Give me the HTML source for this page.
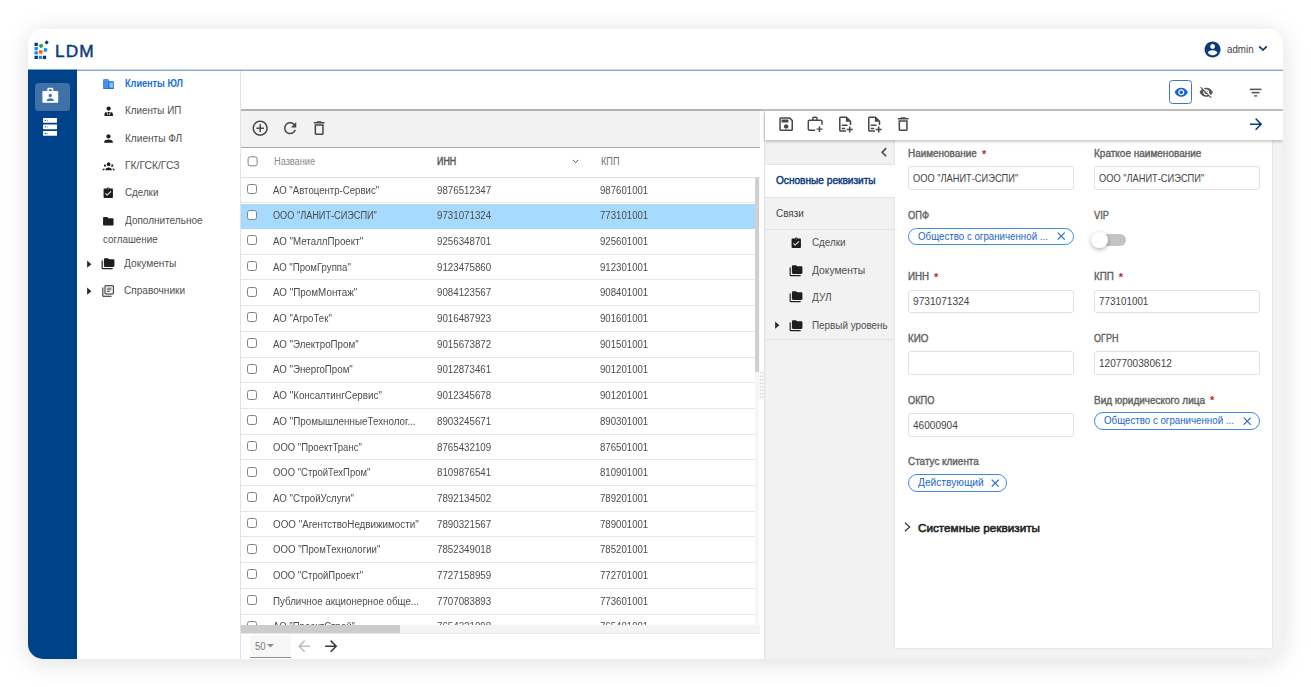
<!DOCTYPE html>
<html lang="ru">
<head>
<meta charset="utf-8">
<title>LDM</title>
<style>
*{box-sizing:border-box;margin:0;padding:0}
html,body{width:1311px;height:687px;overflow:hidden;background:#fff}
body{font-family:"Liberation Sans",sans-serif;font-size:10.4px;color:#333;position:relative}
.abs{position:absolute}
#shadow{position:absolute;left:28px;top:29px;width:1255px;height:630px;border-radius:15px;box-shadow:0 3px 26px rgba(0,0,0,.13)}
#card{position:absolute;left:28px;top:29px;width:1255px;height:630px;border-radius:15px;background:#fff;overflow:hidden}
#in{position:absolute;left:-28px;top:-29px;width:1311px;height:687px}
.t{position:absolute;white-space:nowrap;line-height:14px;height:14px;transform-origin:0 50%}
.cb{position:absolute;left:247px;width:10px;height:10px;border:1px solid #828282;border-radius:2.5px;background:#fff}
.row{position:absolute;left:0;width:514px;border-bottom:1px solid #e6e6e6}
.row.sel{background:#a6dbff;border-bottom-color:#a6dbff}
.inp{position:absolute;height:23.8px;width:166px;border:1px solid #e1e1e1;border-radius:3px;background:#fff}
.chip{position:absolute;height:17.6px;border:1.2px solid #4088e6;border-radius:9px;background:#fff}
.req{color:#c62828}
</style>
</head>
<body>
<div id="shadow"></div>
<div id="card"><div id="in">

<div class="abs" style="left:28px;top:28px;width:1255px;height:42px;background:#fff"></div>
<svg class="abs" style="left:33px;top:38px" width="18" height="23" viewBox="0 0 18 23"><rect x="1.55" y="4.65" width="3.3" height="3.3" rx="0.3" fill="#0a3478"/><rect x="1.55" y="8.9" width="3.3" height="3.3" rx="0.3" fill="#0a8cff"/><rect x="1.55" y="13.2" width="3.3" height="3.3" rx="0.3" fill="#0a8cff"/><rect x="1.55" y="17.7" width="3.3" height="3.3" rx="0.3" fill="#0a3478"/><rect x="6.35" y="6.05" width="3.5" height="3.5" rx="0.3" fill="#2ea043" transform="rotate(-20 8.1 7.8)"/><rect x="5.9" y="12.2" width="3.6" height="3.6" rx="0.3" fill="#ff5f0f" transform="rotate(12 7.7 14)"/><rect x="10.8" y="10.2" width="3.4" height="3.4" rx="0.3" fill="#0a8cff" transform="rotate(8 12.5 11.9)"/><rect x="12.15" y="2.85" width="3.1" height="3.1" rx="0.3" fill="#0a3478" transform="rotate(38 13.7 4.4)"/><rect x="5.9" y="17.75" width="3.2" height="3.2" rx="0.3" fill="#0a8cff"/><rect x="9.9" y="17.75" width="3.2" height="3.2" rx="0.3" fill="#0a3478"/></svg>
<div class="t" style="left:55px;top:41.25px;font-size:17.3px;line-height:20px;height:20px;color:#083a7c;letter-spacing:1.1px;-webkit-text-stroke:0.45px #083a7c">LDM</div>
<svg class="abs" style="left:1202.7px;top:39.7px" width="19.2" height="19.2" viewBox="0 0 24 24"><path fill="#083a7c" d="M12 2C6.48 2 2 6.48 2 12s4.48 10 10 10 10-4.48 10-10S17.52 2 12 2zm0 3c1.66 0 3 1.34 3 3s-1.34 3-3 3-3-1.34-3-3 1.34-3 3-3zm0 14.2c-2.5 0-4.71-1.28-6-3.22.03-1.99 4-3.08 6-3.08 1.99 0 5.97 1.09 6 3.08-1.29 1.94-3.5 3.22-6 3.22z"/></svg>
<div class="t" style="left:1226.7px;top:42.75px;font-size:10.4px;color:#444;transform:scaleX(0.939);">admin</div>
<svg class="abs" style="left:1258px;top:45.1px" width="10" height="7" viewBox="0 0 10 7"><path d="M1.2 1.3L5 5.1 8.8 1.3" fill="none" stroke="#083a7c" stroke-width="1.8"/></svg>
<div class="abs" style="left:28px;top:70px;width:49px;height:590px;background:#00428a"></div>
<div class="abs" style="left:34.5px;top:83px;width:35px;height:27.7px;border-radius:3.5px;background:#3f70a6"></div>
<svg class="abs" style="left:42px;top:87px" width="17" height="17" viewBox="0 0 17 17"><path fill="#fff" fill-rule="evenodd" d="M5.3 4V2.2c0-.8.6-1.4 1.4-1.4h3.2c.8 0 1.400.6 1.4 1.4V4h4c.5 0 .9.400.9.9v10c0 .5-.4.9-.9.9H1.3c-.5 0-.9-.4-.9-.9v-10c0-.5.4-.9.9-.9h4zM6.8 4h3V2.3h-3V4zM8.3 6.8a1.7 1.7 0 1 0 0 3.4 1.7 1.7 0 0 0 0-3.4zM4.8 13.9h7v-.6c0-1.3-2.3-2-3.5-2s-3.500.7-3.5 2v.6z"/></svg>
<svg class="abs" style="left:42.9px;top:118.1px" width="14.3" height="17.8" viewBox="0 0 14.3 17.8"><rect x="0" y="0" width="14.3" height="4.7" rx="0.6" fill="#fff"/><rect x="1.8" y="1.85" width="1.1" height="1.1" fill="#00428a"/><rect x="4" y="1.85" width="0.9" height="1.1" fill="#7f9fc4"/><rect x="0" y="6.45" width="14.3" height="4.7" rx="0.6" fill="#fff"/><rect x="1.8" y="8.3" width="1.1" height="1.1" fill="#00428a"/><rect x="4" y="8.3" width="0.9" height="1.1" fill="#7f9fc4"/><rect x="0" y="13" width="14.3" height="4.7" rx="0.6" fill="#fff"/><rect x="1.8" y="14.85" width="1.1" height="1.1" fill="#00428a"/><rect x="4" y="14.85" width="0.9" height="1.1" fill="#7f9fc4"/></svg>
<div class="abs" style="left:77px;top:70px;width:164px;height:590px;background:#fff;border-right:1px solid #e2e2e2"></div>
<svg class="abs" style="left:103px;top:78.8px" width="11" height="10.4" viewBox="0 0 11 10.4"><path fill="#1a6fe0" d="M0.2 0.9Q0.2 0.2 0.9 0.2H5.1Q5.8 0.2 5.8 0.9V2.2H10.1Q10.8 2.2 10.8 2.9V9.4Q10.8 10.1 10.1 10.1H0.9Q0.2 10.1 0.2 9.4z"/><path stroke="#7fb2f3" stroke-width="0.45" fill="none" d="M1.7 0.8v8.4M3.1 0.8v8.4M4.5 0.8v8.4M0.7 1.5h4.6M0.7 3.3h4.6M0.7 5.1h4.6M0.7 6.9h4.6M0.7 8.7h4.6"/><path fill="#c4dcfa" d="M6.6 3.7h3.2v4.9H6.6z"/><path stroke="#4a8fe8" stroke-width="0.4" d="M8.2 3.7v4.9M6.6 5.3h3.2M6.6 6.9h3.2"/></svg>
<div class="t" style="left:124.7px;top:76.75px;font-size:10.4px;color:#1a6fe0;font-weight:bold;transform:scaleX(0.8801);">Клиенты ЮЛ</div>
<svg class="abs" style="left:103px;top:105px" width="12" height="12" viewBox="0 0 12 12"><circle cx="5.65" cy="3.6" r="2.1" fill="#1e1e1e"/><path fill="#1e1e1e" d="M1.5 11.1V9.2Q1.5 7.1 3.5 7.1H7.8Q9.9 7.1 9.9 9.2V11.1z"/><path stroke="#fff" stroke-width="0.8" fill="none" d="M4 7L4.9 10.1M7.3 7L6.4 10.1"/></svg>
<div class="t" style="left:124.7px;top:103.75px;font-size:10.4px;color:#505050;transform:scaleX(0.9456);">Клиенты ИП</div>
<svg class="abs" style="left:102.2px;top:132.2px" width="13" height="13" viewBox="0 0 24 24"><path fill="#1e1e1e" d="M12 12c2.21 0 4-1.79 4-4s-1.79-4-4-4-4 1.79-4 4 1.79 4 4 4zm0 2c-2.67 0-8 1.34-8 4v2h16v-2c0-2.66-5.33-4-8-4z"/></svg>
<div class="t" style="left:124.7px;top:131.75px;font-size:10.4px;color:#505050;transform:scaleX(0.9699);">Клиенты ФЛ</div>
<svg class="abs" style="left:102px;top:162px" width="14" height="9" viewBox="0 0 14 9"><circle cx="6.6" cy="2.3" r="1.75" fill="#1e1e1e"/><circle cx="3.2" cy="3.4" r="1.25" fill="#1e1e1e"/><circle cx="10" cy="3.4" r="1.25" fill="#1e1e1e"/><circle cx="4.6" cy="2.8" r="1.15" fill="#fff"/><circle cx="8.6" cy="2.8" r="1.15" fill="#fff"/><circle cx="6.6" cy="2.3" r="1.75" fill="#1e1e1e"/><path fill="#1e1e1e" d="M3.3 8.3Q3.5 5.5 6.6 5.5T9.9 8.3zM0.3 8.3Q0.5 6.7 2.3 6.3Q2.7 6.9 2.3 8.3zM12.9 8.3Q12.7 6.7 10.9 6.3Q10.5 6.9 10.9 8.3z"/></svg>
<div class="t" style="left:124.7px;top:158.75px;font-size:10.4px;color:#505050;transform:scaleX(0.9902);">ГК/ГСК/ГСЗ</div>
<svg class="abs" style="left:102.35px;top:186.9px" width="12.5" height="12.5" viewBox="0 0 24 24"><path fill="#1e1e1e" d="M19 3h-4.18C14.4 1.84 13.3 1 12 1c-1.3 0-2.4.84-2.82 2H5c-1.1 0-2 .9-2 2v14c0 1.1.9 2 2 2h14c1.1 0 2-.9 2-2V5c0-1.1-.9-2-2-2zm-7 0c.55 0 1 .45 1 1s-.45 1-1 1-1-.45-1-1 .45-1 1-1zm-2 14l-4-4 1.41-1.41L10 14.17l6.59-6.59L18 9l-8 8z"/></svg>
<div class="t" style="left:124.6px;top:185.75px;font-size:10.4px;color:#505050;transform:scaleX(0.9423);">Сделки</div>
<svg class="abs" style="left:102.4px;top:214.9px" width="12.6" height="12.6" viewBox="0 0 24 24"><path fill="#1e1e1e" d="M10 4H4c-1.1 0-1.99.9-1.99 2L2 18c0 1.1.9 2 2 2h16c1.1 0 2-.9 2-2V8c0-1.1-.9-2-2-2h-8l-2-2z"/></svg>
<div class="t" style="left:124.6px;top:213.75px;font-size:10.4px;color:#505050;transform:scaleX(0.9623);">Дополнительное</div>
<div class="t" style="left:102.6px;top:232.75px;font-size:10.4px;color:#505050;transform:scaleX(0.9434);">соглашение</div>
<svg class="abs" style="left:87.2px;top:259.7px" width="5" height="8.4" viewBox="0 0 5 8.4"><path fill="#2a2a2a" d="M0.1 0.6l4.3 3.6L0.1 7.8z"/></svg>
<svg class="abs" style="left:100.5px;top:257px" width="14" height="14" viewBox="0 0 24 24"><path fill="#1e1e1e" d="M3 6H1v13c0 1.1.9 2 2 2h17v-2H3V6zM21 4h-7l-2-2H7c-1.1 0-1.99.9-1.99 2L5 15c0 1.1.9 2 2 2h14c1.1 0 2-.9 2-2V6c0-1.1-.9-2-2-2z"/></svg>
<div class="t" style="left:124.1px;top:256.75px;font-size:10.4px;color:#505050;transform:scaleX(0.9774);">Документы</div>
<svg class="abs" style="left:87.2px;top:286.6px" width="5" height="8.4" viewBox="0 0 5 8.4"><path fill="#2a2a2a" d="M0.1 0.6l4.3 3.6L0.1 7.8z"/></svg>
<svg class="abs" style="left:100.5px;top:283.90000000000003px" width="14" height="14" viewBox="0 0 24 24"><path fill="#1e1e1e" d="M4 6H2.3v14c0 1 .7 1.7 1.7 1.7h14V20H4V6zm16-4H8c-1.1 0-2 .9-2 2v12c0 1.1.9 2 2 2h12c1.1 0 2-.9 2-2V4c0-1.1-.9-2-2-2zm.3 14.3H7.7V3.7h12.6v12.6zM10 9.4h8v1.3h-8zm0 3.1h5v1.3h-5zm0-6.2h8v1.3h-8z"/></svg>
<div class="t" style="left:124.1px;top:283.75px;font-size:10.4px;color:#505050;transform:scaleX(0.9698);">Справочники</div>
<div class="abs" style="left:241px;top:71px;width:1042px;height:39px;background:#fff"></div>
<div class="abs" style="left:241px;top:109.3px;width:1042px;height:1.4px;background:linear-gradient(90deg,#b2b2b2 0,#b2b2b2 519px,#c6c6c6 524px,#c6c6c6 100%)"></div>
<div class="abs" style="left:1169.2px;top:80px;width:22.8px;height:23.8px;border:1.2px solid #3b78c2;border-radius:3.5px;background:#fff"></div>
<svg class="abs" style="left:1173.8px;top:85.05px" width="14.5" height="14.5" viewBox="0 0 24 24"><path fill="#1565d8" d="M12 4.5C7 4.5 2.73 7.61 1 12c1.73 4.39 6 7.5 11 7.5s9.27-3.11 11-7.5c-1.73-4.39-6-7.5-11-7.5zM12 17c-2.76 0-5-2.24-5-5s2.24-5 5-5 5 2.24 5 5-2.24 5-5 5zm0-8c-1.66 0-3 1.34-3 3s1.34 3 3 3 3-1.34 3-3-1.34-3-3-3z"/></svg>
<svg class="abs" style="left:1199.2px;top:85px" width="14.5" height="14.5" viewBox="0 0 24 24"><path fill="#555" d="M12 7c2.76 0 5 2.24 5 5 0 .65-.13 1.26-.36 1.83l2.92 2.92c1.51-1.26 2.7-2.89 3.43-4.75-1.73-4.39-6-7.5-11-7.5-1.4 0-2.74.25-3.98.7l2.16 2.16C10.74 7.13 11.35 7 12 7zM2 4.27l2.28 2.28.46.46C3.08 8.3 1.78 10.02 1 12c1.73 4.39 6 7.5 11 7.5 1.55 0 3.03-.3 4.38-.84l.42.42L19.73 22 21 20.73 3.27 3 2 4.27zM7.53 9.8l1.55 1.55c-.05.21-.08.43-.08.65 0 1.66 1.34 3 3 3 .22 0 .44-.03.65-.08l1.55 1.55c-.67.33-1.41.53-2.2.53-2.76 0-5-2.24-5-5 0-.79.2-1.53.53-2.2zm4.31-.78l3.15 3.15.02-.16c0-1.66-1.34-3-3-3l-.17.01z"/></svg>
<svg class="abs" style="left:1247.5px;top:84.5px" width="15.2" height="15.2" viewBox="0 0 24 24" stroke="#555" stroke-width="0.4"><path fill="#555" d="M10 18h4v-2h-4v2zM3 6v2h18V6H3zm3 7h12v-2H6v2z"/></svg>
<div class="abs" style="left:241px;top:110.5px;width:519px;height:37px;background:#f2f2f2"></div>
<div class="abs" style="left:241px;top:146.7px;width:519px;height:1.4px;background:#a8a8a8"></div>
<svg class="abs" style="left:251.05px;top:118.65px" width="18.3" height="18.3" viewBox="0 0 24 24"><path fill="#484848" d="M13 7h-2v4H7v2h4v4h2v-4h4v-2h-4V7zm-1-5C6.48 2 2 6.48 2 12s4.48 10 10 10 10-4.48 10-10S17.52 2 12 2zm0 18c-4.41 0-8-3.59-8-8s3.59-8 8-8 8 3.59 8 8-3.59 8-8 8z"/></svg>
<svg class="abs" style="left:280.55px;top:118.75px" width="18.3" height="18.3" viewBox="0 0 24 24"><path fill="#484848" d="M17.65 6.35C16.2 4.9 14.21 4 12 4c-4.42 0-7.99 3.58-7.99 8s3.57 8 7.99 8c3.73 0 6.84-2.55 7.73-6h-2.08c-.82 2.33-3.04 4-5.65 4-3.31 0-6-2.69-6-6s2.69-6 6-6c1.66 0 3.14.69 4.22 1.78L13 11h7V4l-2.35 2.35z"/></svg>
<svg class="abs" style="left:309.85px;top:118.95px" width="18.3" height="18.3" viewBox="0 0 24 24"><path fill="#484848" d="M6 19c0 1.1.9 2 2 2h8c1.1 0 2-.9 2-2V7H6v12zM8 9h8v10H8V9zm7.5-5l-1-1h-5l-1 1H5v2h14V4z"/></svg>
<div class="abs" style="left:241px;top:148px;width:519px;height:29.8px;background:#fff;border-bottom:1px solid #dedede"></div>
<div class="cb" style="top:156px;width:10.4px;height:10.4px;transform:translate(0.6px,0.3px)"></div>
<div class="t" style="left:273.6px;top:154.75px;font-size:10px;color:#8a8a8a;transform:scaleX(0.9175);">Название</div>
<div class="t" style="left:437px;top:154.75px;font-size:10px;color:#555;-webkit-text-stroke:0.4px #555;transform:scaleX(0.8876);">ИНН</div>
<svg class="abs" style="left:572px;top:158.7px" width="7" height="5" viewBox="0 0 7 5"><path d="M0.8 0.9L3.5 3.6 6.2 0.9" fill="none" stroke="#555" stroke-width="1"/></svg>
<div class="t" style="left:600.5px;top:154.75px;font-size:10px;color:#707070;transform:scaleX(0.9158);">КПП</div>
<div class="abs" style="left:241px;top:177px;width:519px;height:448px;overflow:hidden;will-change:transform">
<div class="row" style="top:0.3px;height:26px"></div>
<div class="cb" style="left:6px;top:6.9px"></div>
<div class="t" style="left:32.2px;top:6.75px;font-size:10px;color:#4c4c4c;transform:scaleX(0.9618);">АО "Автоцентр-Сервис"</div>
<div class="t" style="left:195.8px;top:6.75px;font-size:10px;color:#4c4c4c;transform:scaleX(0.9745);">9876512347</div>
<div class="t" style="left:359.3px;top:6.75px;font-size:10px;color:#4c4c4c;transform:scaleX(0.9629);">987601001</div>
<div class="row sel" style="top:27px;height:25px"></div>
<div class="cb" style="left:6px;top:32.6px"></div>
<div class="t" style="left:32.2px;top:31.75px;font-size:10px;color:#4c4c4c;transform:scaleX(0.9146);">ООО "ЛАНИТ-СИЭСПИ"</div>
<div class="t" style="left:195.8px;top:31.75px;font-size:10px;color:#4c4c4c;transform:scaleX(0.9745);">9731071324</div>
<div class="t" style="left:359.3px;top:31.75px;font-size:10px;color:#4c4c4c;transform:scaleX(0.9629);">773101001</div>
<div class="row" style="top:51.7px;height:26px"></div>
<div class="cb" style="left:6px;top:58.3px"></div>
<div class="t" style="left:32.2px;top:57.75px;font-size:10px;color:#4c4c4c;transform:scaleX(0.9749);">АО "МеталлПроект"</div>
<div class="t" style="left:195.8px;top:57.75px;font-size:10px;color:#4c4c4c;transform:scaleX(0.9745);">9256348701</div>
<div class="t" style="left:359.3px;top:57.75px;font-size:10px;color:#4c4c4c;transform:scaleX(0.9629);">925601001</div>
<div class="row" style="top:77.4px;height:26px"></div>
<div class="cb" style="left:6px;top:84px"></div>
<div class="t" style="left:32.2px;top:83.75px;font-size:10px;color:#4c4c4c;transform:scaleX(0.9607);">АО "ПромГруппа"</div>
<div class="t" style="left:195.8px;top:83.75px;font-size:10px;color:#4c4c4c;transform:scaleX(0.9745);">9123475860</div>
<div class="t" style="left:359.3px;top:83.75px;font-size:10px;color:#4c4c4c;transform:scaleX(0.9629);">912301001</div>
<div class="row" style="top:103.1px;height:26px"></div>
<div class="cb" style="left:6px;top:109.7px"></div>
<div class="t" style="left:32.2px;top:108.75px;font-size:10px;color:#4c4c4c;transform:scaleX(0.9855);">АО "ПромМонтаж"</div>
<div class="t" style="left:195.8px;top:108.75px;font-size:10px;color:#4c4c4c;transform:scaleX(0.9745);">9084123567</div>
<div class="t" style="left:359.3px;top:108.75px;font-size:10px;color:#4c4c4c;transform:scaleX(0.9629);">908401001</div>
<div class="row" style="top:128.8px;height:26px"></div>
<div class="cb" style="left:6px;top:135.4px"></div>
<div class="t" style="left:32.2px;top:134.75px;font-size:10px;color:#4c4c4c;transform:scaleX(0.9634);">АО "АгроТек"</div>
<div class="t" style="left:195.8px;top:134.75px;font-size:10px;color:#4c4c4c;transform:scaleX(0.9745);">9016487923</div>
<div class="t" style="left:359.3px;top:134.75px;font-size:10px;color:#4c4c4c;transform:scaleX(0.9629);">901601001</div>
<div class="row" style="top:154.5px;height:26px"></div>
<div class="cb" style="left:6px;top:161.1px"></div>
<div class="t" style="left:32.2px;top:160.75px;font-size:10px;color:#4c4c4c;transform:scaleX(0.9756);">АО "ЭлектроПром"</div>
<div class="t" style="left:195.8px;top:160.75px;font-size:10px;color:#4c4c4c;transform:scaleX(0.9745);">9015673872</div>
<div class="t" style="left:359.3px;top:160.75px;font-size:10px;color:#4c4c4c;transform:scaleX(0.9629);">901501001</div>
<div class="row" style="top:180.2px;height:26px"></div>
<div class="cb" style="left:6px;top:186.8px"></div>
<div class="t" style="left:32.2px;top:185.75px;font-size:10px;color:#4c4c4c;transform:scaleX(0.9718);">АО "ЭнергоПром"</div>
<div class="t" style="left:195.8px;top:185.75px;font-size:10px;color:#4c4c4c;transform:scaleX(0.9745);">9012873461</div>
<div class="t" style="left:359.3px;top:185.75px;font-size:10px;color:#4c4c4c;transform:scaleX(0.9629);">901201001</div>
<div class="row" style="top:205.9px;height:26px"></div>
<div class="cb" style="left:6px;top:212.5px"></div>
<div class="t" style="left:32.2px;top:211.75px;font-size:10px;color:#4c4c4c;transform:scaleX(0.9811);">АО "КонсалтингСервис"</div>
<div class="t" style="left:195.8px;top:211.75px;font-size:10px;color:#4c4c4c;transform:scaleX(0.9745);">9012345678</div>
<div class="t" style="left:359.3px;top:211.75px;font-size:10px;color:#4c4c4c;transform:scaleX(0.9629);">901201001</div>
<div class="row" style="top:231.6px;height:26px"></div>
<div class="cb" style="left:6px;top:238.2px"></div>
<div class="t" style="left:32.2px;top:237.75px;font-size:10px;color:#4c4c4c;transform:scaleX(0.9823);">АО "ПромышленныеТехнолог...</div>
<div class="t" style="left:195.8px;top:237.75px;font-size:10px;color:#4c4c4c;transform:scaleX(0.9745);">8903245671</div>
<div class="t" style="left:359.3px;top:237.75px;font-size:10px;color:#4c4c4c;transform:scaleX(0.9629);">890301001</div>
<div class="row" style="top:257.3px;height:26px"></div>
<div class="cb" style="left:6px;top:263.9px"></div>
<div class="t" style="left:32.2px;top:263.75px;font-size:10px;color:#4c4c4c;transform:scaleX(0.9513);">ООО "ПроектТранс"</div>
<div class="t" style="left:195.8px;top:263.75px;font-size:10px;color:#4c4c4c;transform:scaleX(0.9745);">8765432109</div>
<div class="t" style="left:359.3px;top:263.75px;font-size:10px;color:#4c4c4c;transform:scaleX(0.9629);">876501001</div>
<div class="row" style="top:283px;height:26px"></div>
<div class="cb" style="left:6px;top:289.6px"></div>
<div class="t" style="left:32.2px;top:288.75px;font-size:10px;color:#4c4c4c;transform:scaleX(0.9465);">ООО "СтройТехПром"</div>
<div class="t" style="left:195.8px;top:288.75px;font-size:10px;color:#4c4c4c;transform:scaleX(0.9745);">8109876541</div>
<div class="t" style="left:359.3px;top:288.75px;font-size:10px;color:#4c4c4c;transform:scaleX(0.9629);">810901001</div>
<div class="row" style="top:308.7px;height:26px"></div>
<div class="cb" style="left:6px;top:315.3px"></div>
<div class="t" style="left:32.2px;top:314.75px;font-size:10px;color:#4c4c4c;transform:scaleX(0.9704);">АО "СтройУслуги"</div>
<div class="t" style="left:195.8px;top:314.75px;font-size:10px;color:#4c4c4c;transform:scaleX(0.9745);">7892134502</div>
<div class="t" style="left:359.3px;top:314.75px;font-size:10px;color:#4c4c4c;transform:scaleX(0.9629);">789201001</div>
<div class="row" style="top:334.4px;height:26px"></div>
<div class="cb" style="left:6px;top:341px"></div>
<div class="t" style="left:32.2px;top:340.75px;font-size:10px;color:#4c4c4c;transform:scaleX(0.9819);">ООО "АгентствоНедвижимости"</div>
<div class="t" style="left:195.8px;top:340.75px;font-size:10px;color:#4c4c4c;transform:scaleX(0.9745);">7890321567</div>
<div class="t" style="left:359.3px;top:340.75px;font-size:10px;color:#4c4c4c;transform:scaleX(0.9629);">789001001</div>
<div class="row" style="top:360.1px;height:26px"></div>
<div class="cb" style="left:6px;top:366.7px"></div>
<div class="t" style="left:32.2px;top:365.75px;font-size:10px;color:#4c4c4c;transform:scaleX(0.9634);">ООО "ПромТехнологии"</div>
<div class="t" style="left:195.8px;top:365.75px;font-size:10px;color:#4c4c4c;transform:scaleX(0.9745);">7852349018</div>
<div class="t" style="left:359.3px;top:365.75px;font-size:10px;color:#4c4c4c;transform:scaleX(0.9629);">785201001</div>
<div class="row" style="top:385.8px;height:26px"></div>
<div class="cb" style="left:6px;top:392.4px"></div>
<div class="t" style="left:32.2px;top:391.75px;font-size:10px;color:#4c4c4c;transform:scaleX(0.9518);">ООО "СтройПроект"</div>
<div class="t" style="left:195.8px;top:391.75px;font-size:10px;color:#4c4c4c;transform:scaleX(0.9745);">7727158959</div>
<div class="t" style="left:359.3px;top:391.75px;font-size:10px;color:#4c4c4c;transform:scaleX(0.9629);">772701001</div>
<div class="row" style="top:411.5px;height:26px"></div>
<div class="cb" style="left:6px;top:418.1px"></div>
<div class="t" style="left:32.2px;top:417.75px;font-size:10px;color:#4c4c4c;transform:scaleX(0.9745);">Публичное акционерное обще...</div>
<div class="t" style="left:195.8px;top:417.75px;font-size:10px;color:#4c4c4c;transform:scaleX(0.9745);">7707083893</div>
<div class="t" style="left:359.3px;top:417.75px;font-size:10px;color:#4c4c4c;transform:scaleX(0.9629);">773601001</div>
<div class="row" style="top:437.2px;height:26px"></div>
<div class="cb" style="left:6px;top:443.8px"></div>
<div class="t" style="left:32.2px;top:442.75px;font-size:10px;color:#4c4c4c;transform:scaleX(0.9584);">АО "ПроектСтрой"</div>
<div class="t" style="left:195.8px;top:442.75px;font-size:10px;color:#4c4c4c;transform:scaleX(0.9745);">7654321098</div>
<div class="t" style="left:359.3px;top:442.75px;font-size:10px;color:#4c4c4c;transform:scaleX(0.9629);">765401001</div>
</div>
<div class="abs" style="left:755.1px;top:177.8px;width:3.8px;height:447.7px;background:#f6f6f6;transform:translateX(0.1px)"></div>
<div class="abs" style="left:755.1px;top:177.8px;width:3.8px;height:194px;background:#cfcfcf;transform:translateX(0.1px)"></div>
<div class="abs" style="left:241px;top:625px;width:519px;height:7.5px;background:#f4f4f4"></div>
<div class="abs" style="left:241px;top:625px;width:159px;height:7.5px;background:#cccccc"></div>
<div class="abs" style="left:241px;top:632.5px;width:519px;height:26px;background:#fff;border-top:1px solid #e6e6e6"></div>
<div class="abs" style="left:250.4px;top:635.4px;width:40.3px;height:23px;background:#f7f7f7;border-bottom:1px solid #8f8f8f"></div>
<div class="t" style="left:255.4px;top:639.75px;font-size:10px;color:#777;transform:scaleX(0.9529);">50</div>
<svg class="abs" style="left:266.8px;top:643.8px" width="7" height="4" viewBox="0 0 7 4"><path fill="#8a8a8a" d="M0 0h6.8L3.4 3.6z"/></svg>
<svg class="abs" style="left:295.15px;top:637.4px" width="18.4" height="18.4" viewBox="0 0 24 24"><path fill="#bdbdbd" d="M20 11H7.83l5.59-5.59L12 4l-8 8 8 8 1.41-1.41L7.83 13H20v-2z"/></svg>
<svg class="abs" style="left:321.95px;top:637.4px" width="18.4" height="18.4" viewBox="0 0 24 24"><path fill="#3c3c3c" d="M12 4l-1.41 1.41L16.17 11H4v2h12.17l-5.58 5.59L12 20l8-8z"/></svg>
<div class="abs" style="left:760px;top:110.7px;width:5px;height:550px;background:#fff;border-right:1px solid #e0e0e0"></div>
<svg class="abs" style="left:759px;top:371px" width="6" height="28" viewBox="0 0 6 28"><rect x="0.7" y="1.1" width="1.2" height="1.2" fill="#bdbdbd"/><rect x="3.1" y="1.1" width="1.2" height="1.2" fill="#bdbdbd"/><rect x="0.7" y="4.6" width="1.2" height="1.2" fill="#bdbdbd"/><rect x="3.1" y="4.6" width="1.2" height="1.2" fill="#bdbdbd"/><rect x="0.7" y="8.1" width="1.2" height="1.2" fill="#bdbdbd"/><rect x="3.1" y="8.1" width="1.2" height="1.2" fill="#bdbdbd"/><rect x="0.7" y="11.6" width="1.2" height="1.2" fill="#bdbdbd"/><rect x="3.1" y="11.6" width="1.2" height="1.2" fill="#bdbdbd"/><rect x="0.7" y="15.1" width="1.2" height="1.2" fill="#bdbdbd"/><rect x="3.1" y="15.1" width="1.2" height="1.2" fill="#bdbdbd"/><rect x="0.7" y="18.6" width="1.2" height="1.2" fill="#bdbdbd"/><rect x="3.1" y="18.6" width="1.2" height="1.2" fill="#bdbdbd"/><rect x="0.7" y="22.1" width="1.2" height="1.2" fill="#bdbdbd"/><rect x="3.1" y="22.1" width="1.2" height="1.2" fill="#bdbdbd"/><rect x="0.7" y="25.6" width="1.2" height="1.2" fill="#bdbdbd"/><rect x="3.1" y="25.6" width="1.2" height="1.2" fill="#bdbdbd"/></svg>
<div class="abs" style="left:765px;top:110.7px;width:518px;height:550px;background:#f2f2f2"></div>
<div class="abs" style="left:894.7px;top:140px;width:377.7px;height:508px;background:#fff;box-shadow:0 0 2px rgba(0,0,0,.14)"></div>
<svg class="abs" style="left:874.8px;top:143.25px" width="18.3" height="18.3" viewBox="0 0 24 24"><path fill="#444" d="M15.41 7.41L14 6l-6 6 6 6 1.41-1.41L10.83 12z"/></svg>
<div class="abs" style="left:765px;top:164.2px;width:129.7px;height:34px;background:#fff;border-top:1px solid #e4e4e4;border-bottom:1px solid #e4e4e4"></div>
<div class="t" style="left:776.1px;top:173.75px;font-size:10.4px;color:#0c3c80;-webkit-text-stroke:0.45px #0c3c80;transform:scaleX(0.9727);">Основные реквизиты</div>
<div class="t" style="left:775.9px;top:206.75px;font-size:10.4px;color:#444;transform:scaleX(0.9544);">Связи</div>
<div class="abs" style="left:765px;top:229px;width:129.7px;height:1px;background:#e2e2e2"></div>
<div class="abs" style="left:765px;top:338.8px;width:129.7px;height:1px;background:#e2e2e2"></div>
<svg class="abs" style="left:789.85px;top:236.7px" width="12.5" height="12.5" viewBox="0 0 24 24"><path fill="#1e1e1e" d="M19 3h-4.18C14.4 1.84 13.3 1 12 1c-1.3 0-2.4.84-2.82 2H5c-1.1 0-2 .9-2 2v14c0 1.1.9 2 2 2h14c1.1 0 2-.9 2-2V5c0-1.1-.9-2-2-2zm-7 0c.55 0 1 .45 1 1s-.45 1-1 1-1-.45-1-1 .45-1 1-1zm-2 14l-4-4 1.41-1.41L10 14.17l6.59-6.59L18 9l-8 8z"/></svg>
<div class="t" style="left:812px;top:235.75px;font-size:10.4px;color:#505050;transform:scaleX(0.9479);">Сделки</div>
<svg class="abs" style="left:789.3px;top:264px" width="14" height="14" viewBox="0 0 24 24"><path fill="#1e1e1e" d="M3 6H1v13c0 1.1.9 2 2 2h17v-2H3V6zM21 4h-7l-2-2H7c-1.1 0-1.99.9-1.99 2L5 15c0 1.1.9 2 2 2h14c1.1 0 2-.9 2-2V6c0-1.1-.9-2-2-2z"/></svg>
<div class="t" style="left:812px;top:263.75px;font-size:10.4px;color:#505050;transform:scaleX(0.9923);">Документы</div>
<svg class="abs" style="left:789.3px;top:290.4px" width="14" height="14" viewBox="0 0 24 24"><path fill="#1e1e1e" d="M3 6H1v13c0 1.1.9 2 2 2h17v-2H3V6zM21 4h-7l-2-2H7c-1.1 0-1.99.9-1.99 2L5 15c0 1.1.9 2 2 2h14c1.1 0 2-.9 2-2V6c0-1.1-.9-2-2-2z"/></svg>
<div class="t" style="left:812px;top:290.75px;font-size:10.4px;color:#505050;transform:scaleX(0.9681);">ДУЛ</div>
<svg class="abs" style="left:774.6px;top:321.1px" width="5" height="8.4" viewBox="0 0 5 8.4"><path fill="#2a2a2a" d="M0.1 0.6l4.3 3.6L0.1 7.8z"/></svg>
<svg class="abs" style="left:788.6px;top:318.6px" width="14" height="14" viewBox="0 0 24 24"><path fill="#1e1e1e" d="M3 6H1v13c0 1.1.9 2 2 2h17v-2H3V6zM21 4h-7l-2-2H7c-1.1 0-1.99.9-1.99 2L5 15c0 1.1.9 2 2 2h14c1.1 0 2-.9 2-2V6c0-1.1-.9-2-2-2z"/></svg>
<div class="t" style="left:811.5px;top:318.75px;font-size:10.4px;color:#505050;transform:scaleX(0.9492);">Первый уровень</div>
<div class="abs" style="left:765px;top:110.7px;width:518px;height:29.4px;background:#fff;box-shadow:0 1px 3.5px rgba(0,0,0,.3)"></div>
<svg class="abs" style="left:776.85px;top:115.05px" width="18.3" height="18.3" viewBox="0 0 24 24"><path fill="#484848" d="M17 3H5c-1.11 0-2 .9-2 2v14c0 1.1.89 2 2 2h14c1.1 0 2-.9 2-2V7l-4-4zm2 16H5V5h11.17L19 7.83V19zm-7-7c-1.66 0-3 1.34-3 3s1.34 3 3 3 3-1.34 3-3-1.34-3-3-3zM6 6h9v4H6z"/></svg>
<svg class="abs" style="left:806.4px;top:114.8px" width="18.3" height="18.3" viewBox="0 0 24 24"><path fill="none" stroke="#484848" stroke-width="1.9" d="M21 12.8V8.5Q21 7 19.5 7H4.5Q3 7 3 8.5V18.5Q3 20 4.5 20H12M8.9 7V4.5Q8.9 3 10.4 3H13Q14.5 3 14.5 4.5V7M13.9 18.5H21.5M17.7 14.7V22.3"/></svg>
<svg class="abs" style="left:836.2px;top:114.5px" width="18.3" height="18.3" viewBox="0 0 24 24"><path fill="#484848" d="M14 2H6c-1.1 0-2 .9-2 2v16c0 1.1.89 2 1.99 2H13v-2H6V4h7v5h5v4h2V8l-6-6zM7.5 12.6h7.6v1.9H7.5zM7.5 16.8h4.6v1.9H7.5zM19 15h-2v3h-3v2h3v3h2v-3h3v-2h-3v-3z"/></svg>
<svg class="abs" style="left:865.3px;top:114.5px" width="18.3" height="18.3" viewBox="0 0 24 24"><path fill="#484848" d="M14 2H6c-1.1 0-2 .9-2 2v16c0 1.1.89 2 1.99 2H13v-2H6V4h7v5h5v4h2V8l-6-6zM7.5 12.6h7.6v1.9H7.5zM7.5 16.8h4.6v1.9H7.5zM19 15h-2v3h-3v2h3v3h2v-3h3v-2h-3v-3z"/></svg>
<svg class="abs" style="left:894.25px;top:114.85px" width="18.3" height="18.3" viewBox="0 0 24 24"><path fill="#484848" d="M6 19c0 1.1.9 2 2 2h8c1.1 0 2-.9 2-2V7H6v12zM8 9h8v10H8V9zm7.5-5l-1-1h-5l-1 1H5v2h14V4z"/></svg>
<svg class="abs" style="left:1246.7px;top:115px" width="18.3" height="18.3" viewBox="0 0 24 24"><path fill="#083a7c" d="M12 4l-1.41 1.41L16.17 11H4v2h12.17l-5.58 5.59L12 20l8-8z"/></svg>
<div class="t" style="left:907.8px;top:146.75px;font-size:10px;color:#606060;-webkit-text-stroke:0.35px #606060;transform:scaleX(0.9925);">Наименование</div>
<div class="t" style="left:981.9px;top:146.5px;font-size:11px;font-weight:bold;color:#c62828">*</div>
<div class="inp" style="left:907.8px;top:166.4px"></div>
<div class="t" style="left:912.8px;top:171.75px;font-size:10.4px;color:#444;transform:scaleX(0.8922);">ООО "ЛАНИТ-СИЭСПИ"</div>
<div class="t" style="left:1093.6px;top:146.75px;font-size:10px;color:#606060;-webkit-text-stroke:0.35px #606060;transform:scaleX(1.0007);">Краткое наименование</div>
<div class="inp" style="left:1093.6px;top:166.4px"></div>
<div class="t" style="left:1098.6px;top:171.75px;font-size:10.4px;color:#444;transform:scaleX(0.8922);">ООО "ЛАНИТ-СИЭСПИ"</div>
<div class="t" style="left:907.8px;top:208.75px;font-size:10px;color:#606060;-webkit-text-stroke:0.35px #606060;transform:scaleX(0.9305);">ОПФ</div>
<div class="chip" style="left:907.8px;top:227.8px;width:166px"></div>
<div class="t" style="left:918.1999999999999px;top:229.75px;font-size:10.4px;color:#2266cc;transform:scaleX(0.9356);">Общество с ограниченной ...</div>
<svg class="abs" style="left:1057.2px;top:232.1px" width="8.4" height="8.4" viewBox="0 0 8.4 8.4"><path d="M0.7 0.7L7.7 7.7M7.7 0.7L0.7 7.7" stroke="#2266cc" stroke-width="1.1" fill="none"/></svg>
<div class="t" style="left:1093.6px;top:208.75px;font-size:10px;color:#606060;-webkit-text-stroke:0.35px #606060;transform:scaleX(0.9306);">VIP</div>
<div class="abs" style="left:1096px;top:234px;width:30px;height:11.7px;border-radius:6px;background:#c3c3c3"></div>
<div class="abs" style="left:1091.4px;top:231.7px;width:16.4px;height:16.4px;border-radius:50%;background:#fff;box-shadow:0 1.5px 4px rgba(0,0,0,.3)"></div>
<div class="t" style="left:907.8px;top:269.75px;font-size:10px;color:#606060;-webkit-text-stroke:0.35px #606060;transform:scaleX(0.9708);">ИНН</div>
<div class="t" style="left:934.1px;top:269.7px;font-size:11px;font-weight:bold;color:#c62828">*</div>
<div class="inp" style="left:907.8px;top:289.6px"></div>
<div class="t" style="left:912.8px;top:294.75px;font-size:10.4px;color:#444;transform:scaleX(0.9751);">9731071324</div>
<div class="t" style="left:1093.6px;top:269.75px;font-size:10px;color:#606060;-webkit-text-stroke:0.35px #606060;transform:scaleX(0.9802);">КПП</div>
<div class="t" style="left:1118.7px;top:269.7px;font-size:11px;font-weight:bold;color:#c62828">*</div>
<div class="inp" style="left:1093.6px;top:289.6px"></div>
<div class="t" style="left:1098.6px;top:294.75px;font-size:10.4px;color:#444;transform:scaleX(0.9489);">773101001</div>
<div class="t" style="left:907.8px;top:331.75px;font-size:10px;color:#606060;-webkit-text-stroke:0.35px #606060;transform:scaleX(0.9812);">КИО</div>
<div class="inp" style="left:907.8px;top:351.2px"></div>
<div class="t" style="left:1093.6px;top:331.75px;font-size:10px;color:#606060;-webkit-text-stroke:0.35px #606060;transform:scaleX(0.9009);">ОГРН</div>
<div class="inp" style="left:1093.6px;top:351.2px"></div>
<div class="t" style="left:1098.6px;top:356.75px;font-size:10.4px;color:#444;transform:scaleX(0.9695);">1207700380612</div>
<div class="t" style="left:907.8px;top:393.75px;font-size:10px;color:#606060;-webkit-text-stroke:0.35px #606060;transform:scaleX(0.9276);">ОКПО</div>
<div class="inp" style="left:907.8px;top:412.8px"></div>
<div class="t" style="left:912.8px;top:418.75px;font-size:10.4px;color:#444;transform:scaleX(0.9682);">46000904</div>
<div class="t" style="left:1093.6px;top:393.75px;font-size:10px;color:#606060;-webkit-text-stroke:0.35px #606060;transform:scaleX(0.9979);">Вид юридического лица</div>
<div class="t" style="left:1209.9px;top:392.9px;font-size:11px;font-weight:bold;color:#c62828">*</div>
<div class="chip" style="left:1093.6px;top:412.2px;width:166px"></div>
<div class="t" style="left:1104px;top:413.75px;font-size:10.4px;color:#2266cc;transform:scaleX(0.9356);">Общество с ограниченной ...</div>
<svg class="abs" style="left:1243px;top:416.5px" width="8.4" height="8.4" viewBox="0 0 8.4 8.4"><path d="M0.7 0.7L7.7 7.7M7.7 0.7L0.7 7.7" stroke="#2266cc" stroke-width="1.1" fill="none"/></svg>
<div class="t" style="left:907.8px;top:454.75px;font-size:10px;color:#606060;-webkit-text-stroke:0.35px #606060;transform:scaleX(0.9914);">Статус клиента</div>
<div class="chip" style="left:907.8px;top:474.2px;width:99.5px"></div>
<div class="t" style="left:918.1999999999999px;top:475.75px;font-size:10.4px;color:#2266cc;transform:scaleX(0.9795);">Действующий</div>
<svg class="abs" style="left:990.7px;top:478.5px" width="8.4" height="8.4" viewBox="0 0 8.4 8.4"><path d="M0.7 0.7L7.7 7.7M7.7 0.7L0.7 7.7" stroke="#2266cc" stroke-width="1.1" fill="none"/></svg>
<svg class="abs" style="left:904.2px;top:522.4px" width="7" height="10" viewBox="0 0 7 10"><path d="M0.9 0.8L5.7 5 0.9 9.2" fill="none" stroke="#333" stroke-width="1.15"/></svg>
<div class="t" style="left:917.5px;top:521.25px;font-size:11.8px;color:#222;-webkit-text-stroke:0.55px #222;transform:scaleX(0.9932);">Системные реквизиты</div>
<div class="abs" style="left:77px;top:69px;width:1206px;height:1px;background:#c9d8eb"></div>
<div class="abs" style="left:77px;top:70px;width:1206px;height:1px;background:#86a8d3"></div>
<div class="abs" style="left:28px;top:69px;width:49px;height:1px;background:#7f9fc4"></div>
</div></div>
</body>
</html>
